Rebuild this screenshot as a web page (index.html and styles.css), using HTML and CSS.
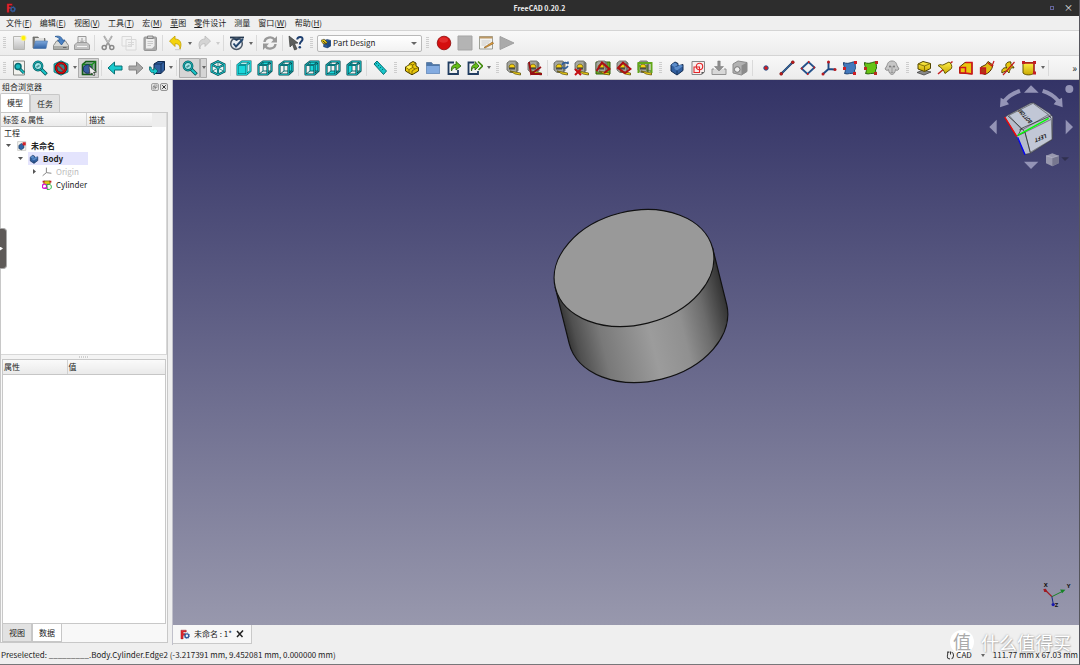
FILE: index.html
```html
<!DOCTYPE html>
<html lang="zh-CN">
<head>
<meta charset="utf-8">
<title>FreeCAD 0.20.2</title>
<link rel="stylesheet" href="styles.css">
</head>
<body>
<svg class="defs" aria-hidden="true">
  <defs>
    <linearGradient id="gGray" x2="0" y2="1"><stop stop-color="#f4f4f4"/><stop offset="1" stop-color="#bdbdbd"/></linearGradient>
    <linearGradient id="gBlue" x2="0" y2="1"><stop stop-color="#7fa9dc"/><stop offset="1" stop-color="#2f62a6"/></linearGradient>
    <linearGradient id="gYellow" x2="0" y2="1"><stop stop-color="#fff04a"/><stop offset="1" stop-color="#c9a800"/></linearGradient>
    <linearGradient id="gSide"><stop stop-color="#383838"/><stop offset=".05" stop-color="#505050"/><stop offset=".2" stop-color="#797979"/><stop offset=".5" stop-color="#9c9c9c"/><stop offset=".7" stop-color="#909090"/><stop offset=".85" stop-color="#6c6c6c"/><stop offset="1" stop-color="#333"/></linearGradient>
    <path id="cubeEdges" d="M1.500 5 6 1.500H14.500V11L10.500 14.500H1.500ZM1.500 5H10.500V14.500M10.500 5 14.500 1.500" fill="none"/>
    <path id="cubeBack" d="M6 1.500V11H14.500M6 11 1.500 14.500" fill="none"/>
    <g id="cubeWire"><use href="#cubeBack" stroke="#0c6e73" stroke-width="1"/><use href="#cubeEdges" stroke="#07494e" stroke-width="2.100" stroke-linejoin="round"/><use href="#cubeEdges" stroke="#17adb2" stroke-width=".9"/></g>
    <g id="tape"><path d="M1 3 3.500 1H9.500L12 3V10.500L10 12.500H4L1 10Z" fill="#a5a79f" stroke="#5a5c56" stroke-width=".8"/><path d="M9.500 1 12 3V10.500L10 12.500Z" fill="#75776f"/><path d="M3 7.500C3 3 9 3 9 7.500Z" fill="#f5d011" stroke="#5c4d00" stroke-width=".6"/><path d="M3 8H9V9.500H3Z" fill="#4a4b45"/><path d="M4 11 14.500 13V15L9 14Z" fill="#f0cf18" stroke="#554700" stroke-width=".7"/></g>
    <symbol id="logo" viewBox="0 0 16 16"><path d="M1.500 1H10V4H5V6.500H8V9.300H5V15H1.500Z" fill="#e3262e" stroke="#7b0f16" stroke-width=".6"/><circle cx="11" cy="10" r="3" fill="none" stroke="#315b9d" stroke-width="2.200"/><circle cx="11" cy="10" r="4.400" fill="none" stroke="#315b9d" stroke-width="1.200" stroke-dasharray="1.700 1.750"/></symbol>
    <symbol id="new" viewBox="0 0 16 16"><path d="M2.500 1.500H13.500V14.500H2.500Z" fill="url(#gGray)" stroke="#b6b6b2"/><circle cx="12.500" cy="3" r="3" fill="#fff36b" opacity=".8"/><circle cx="12.500" cy="3" r="1.900" fill="#fff200"/></symbol>
    <symbol id="open" viewBox="0 0 16 16"><path d="M1 13V2H6L7 3.500H13V13Z" fill="#81827e" stroke="#5e605c" stroke-width=".7"/><path d="M3 3H12V8H3Z" fill="#e1e1df"/><path d="M3.500 6H15.500L14 13.500H1.500Z" fill="url(#gBlue)" stroke="#4e79b0" stroke-width=".6"/></symbol>
    <symbol id="save" viewBox="0 0 16 16"><path d="M3.500 6H12.500L15.500 10.500V14.500H.5V10.500Z" fill="#d9dad7" stroke="#777975" stroke-width=".8"/><path d="M1 11H15V14H1Z" fill="#aaaca8"/><path d="M2 1.500C6 .5 9 1.500 9.500 5H12L8.500 10 4.500 5H6.500C6.500 3 4.500 2 2 1.500Z" fill="#4b82c4" stroke="#20528d" stroke-width=".7"/><path d="M10 12.500H13.500" stroke="#666"/></symbol>
    <symbol id="print" viewBox="0 0 16 16"><path d="M4 1.500H12V8H4Z" fill="#eee" stroke="#999"/><path d="M8 3V7M6 5.500 8 7.500 10 5.500" fill="none" stroke="#999"/><path d="M3 7.500H13L15.500 10V14.500H.5V10Z" fill="#c2c2c2" stroke="#9b9b9b"/><path d="M3 11.500H13" stroke="#f3f3f3"/></symbol>
    <symbol id="cut" viewBox="0 0 16 16"><path d="M4 1 10.300 11.500M12 1 5.700 11.500" stroke="#9b9b9b" stroke-width="1.700"/><path d="M4.500 1.500 8 7.500M11.500 1.500 8 7.500" stroke="#ddd" stroke-width=".6"/><circle cx="4.200" cy="12.500" r="2" fill="none" stroke="#898989" stroke-width="1.500"/><circle cx="11.800" cy="12.500" r="2" fill="none" stroke="#898989" stroke-width="1.500"/></symbol>
    <symbol id="copy" viewBox="0 0 16 16"><path d="M1 1.500H10.500V11H1ZM5 4.500H15V15H5Z" fill="#f3f3f3" stroke="#d8d8d8"/><path d="M7 7.500H13M7 9.500H13M7 11.500H11" stroke="#d9d9d9"/></symbol>
    <symbol id="paste" viewBox="0 0 16 16"><rect x="2" y="2" width="12.500" height="13.500" rx="1" fill="#aaa" stroke="#959595"/><path d="M4 4H12.500V11L10 13.500H4Z" fill="#eee"/><path d="M5.500 1H11V3.500H5.500Z" fill="#ccc" stroke="#777" stroke-width=".8"/><path d="M5.500 6.500H11M5.500 8.500H11M5.500 10.500H9" stroke="#c9c9c9"/></symbol>
    <symbol id="undo" viewBox="0 0 16 16"><path d="M1.500 6 7 1V4C12 4 14.500 8 12 14 12 10 10 8.500 7 8.700V11.500Z" fill="#f4d30b" stroke="#c2a000" stroke-width=".8"/><path d="M7 14.700H13" stroke="#ccc"/></symbol>
    <symbol id="redo" viewBox="0 0 16 16"><path d="M14.500 6 9 1V4C4 4 1.500 8 4 14 4 10 6 8.500 9 8.700V11.500Z" fill="#d4d4d4" stroke="#bababa" stroke-width=".8"/></symbol>
    <symbol id="check" viewBox="0 0 16 16"><path d="M1 2.500H15" stroke="#25384f" stroke-width="1.800"/><circle cx="7.500" cy="8.700" r="5.800" fill="#e8edf3" stroke="#4c5866" stroke-width="1.500"/><path d="M3 3.500H12L7.500 6Z" fill="#1d3858"/><path d="M4.500 8.500 7 11.500 14 4" fill="none" stroke="#24476f" stroke-width="1.900"/></symbol>
    <symbol id="refresh" viewBox="0 0 16 16"><path d="M2.500 7C3 2 10 1 12.500 4.500M13.500 9C13 14 6 15 3.500 11.500" fill="none" stroke="#999" stroke-width="2.400"/><path d="M15 1V7.500H9ZM1 15V8.500H7Z" fill="#999"/></symbol>
    <symbol id="whats" viewBox="0 0 16 16"><path d="M1 1 10 8 6.500 8.500 9 14 6.500 15 4.500 9.500 2 12Z" fill="#5c5e5c" stroke="#313331" stroke-width=".6"/><path d="M9.200 4.500C9.500 1 15 1 14.500 4.500 14.200 6.800 11.800 6.500 11.800 9.500" fill="none" stroke="#1e3f70" stroke-width="2"/><circle cx="11.800" cy="12.200" r="1.300" fill="#1e3f70"/></symbol>
    <symbol id="pd" viewBox="0 0 16 16"><path d="M5 3 10 1.500 15.500 3V12L10 15 4 13Z" fill="#2c5c9c" stroke="#123158" stroke-width=".8"/><path d="M10 5 15.500 3V12L10 15Z" fill="#214a80"/><path d="M0 3 5 1 10 6 8 9 3 8Z" fill="#e9cb1b" stroke="#3a3515"/><path d="M3 4 9 9" stroke="#111" stroke-width="1.200"/></symbol>
    <symbol id="record" viewBox="0 0 16 16"><circle cx="8" cy="8" r="6.800" fill="#d50e0e" stroke="#8d0808" stroke-width=".8"/><ellipse cx="7.500" cy="5" rx="4.500" ry="2.800" fill="#f04747" opacity=".5"/></symbol>
    <symbol id="stop" viewBox="0 0 16 16"><path d="M1 1H15V15H1Z" fill="#b4b4b4" stroke="#a5a5a5"/></symbol>
    <symbol id="macro" viewBox="0 0 16 16"><path d="M1.500 1.500H14.500V14H1.500Z" fill="#f2f2ef" stroke="#888a80" stroke-width=".8"/><path d="M1.500 1.500H14.500V3.500H1.500Z" fill="#bd9964"/><path d="M3.500 6H12.500M3.500 8H11M3.500 10H8" stroke="#bbb" stroke-width=".7"/><path d="M6 12.500 14.500 7 15.500 8.500 7 13Z" fill="#e9a23b" stroke="#82551b" stroke-width=".6"/></symbol>
    <symbol id="play" viewBox="0 0 16 16"><path d="M1 1.500 15 8 1 14.500Z" fill="#aaa" stroke="#a0a0a0"/></symbol>
    <symbol id="mag" viewBox="0 0 16 16"><path d="M8.500 8.500 14.500 14.500" stroke="#075357" stroke-width="3.600"/><path d="M9 9 14 14" stroke="#18c7ca" stroke-width="2"/><circle cx="6" cy="6" r="4.200" fill="#a9eaec" stroke="#07555a" stroke-width="2.400"/><circle cx="6" cy="6" r="4.200" fill="none" stroke="#17bdc1" stroke-width="1.100"/></symbol>
    <symbol id="fitall" viewBox="0 0 16 16"><path d="M2.500 1H13.500V15H2.500Z" fill="#f2f2ee" stroke="#858783"/><path d="M8.500 8.500 13 13" stroke="#075357" stroke-width="3"/><path d="M9 9 13 13" stroke="#18c7ca" stroke-width="1.500"/><circle cx="7" cy="6.500" r="3" fill="#18bbc0" stroke="#086a70" stroke-width="1.500"/></symbol>
    <symbol id="fitsel" viewBox="0 0 16 16"><use href="#mag"/><path d="M4 6.500 7 4.500 8 6 5 8Z" fill="#4d969a"/></symbol>
    <symbol id="nodraw" viewBox="0 0 16 16"><path d="M8 .8 15 4V12L8 15.200 1 12V4Z" fill="#19c5ca" stroke="#08686c" stroke-width=".8"/><circle cx="8" cy="8" r="5" fill="#3d8589" stroke="#5a0707" stroke-width="2.600"/><circle cx="8" cy="8" r="5" fill="none" stroke="#d40c0c" stroke-width="1.300"/><path d="M4.500 4.500 11.500 11.500" stroke="#d40c0c" stroke-width="1.500"/></symbol>
    <symbol id="selbox" viewBox="0 0 16 16"><path d="M1.500 4.500 5 1.500H14.500V11.500L11 14.500H1.500Z" fill="#92a8a3" stroke="#165d19" stroke-width="1.600"/><path d="M1.500 4.500H11V14.500M11 4.500 14.500 1.500" fill="none" stroke="#168f1b" stroke-width="1.400"/><circle cx="6.500" cy="9" r="4.300" fill="#355e9f" stroke="#172c5c"/><path d="M8 6 15.500 12 12.500 12.300 14 15 12.500 16 11 13 9 14.500Z" fill="#eee" stroke="#333" stroke-width=".7"/></symbol>
    <symbol id="left" viewBox="0 0 16 16"><path d="M1 8 7.500 2V6H15V10H7.500V14Z" fill="#18c9cd" stroke="#087074"/></symbol>
    <symbol id="right" viewBox="0 0 16 16"><path d="M15 8 8.500 2V6H1V10H8.500V14Z" fill="#a9a9a9" stroke="#858585"/></symbol>
    <symbol id="link" viewBox="0 0 16 16"><path d="M5 4 9 1.500H15.500V10L12 13.500H5Z" fill="#315f9f" stroke="#10294d"/><path d="M5 4H12V13.500M12 4 15.500 1.500" fill="none" stroke="#10294d" stroke-width=".8"/><path d="M0 7C1 13 3 13 5 12.500V15L9 11 5 7.500V10C3 10 2 9 2 7Z" fill="#18c7ca" stroke="#075b60" stroke-width=".8"/></symbol>
    <symbol id="iso" viewBox="0 0 16 16"><path d="M8 1.200 14.500 4.500V11.500L8 14.800 1.500 11.500V4.500ZM1.500 4.500 8 7.700 14.500 4.500M8 7.700V14.800" fill="#e8f8f8" stroke="#07494e" stroke-width="2.100"/><path d="M8 1.200V8M1.500 11.500 8 8 14.500 11.500" stroke="#0d7377" stroke-width=".8" fill="none"/><path d="M8 1.200 14.500 4.500V11.500L8 14.800 1.500 11.500V4.500ZM1.500 4.500 8 7.700 14.500 4.500M8 7.700V14.800" fill="none" stroke="#19c0c5" stroke-width="1"/></symbol>
    <symbol id="front" viewBox="0 0 16 16"><path d="M1.500 5 6 1.500H14.500V11L10.500 14.500H1.500Z" fill="#b9eff0"/><path d="M1.500 5H10.500V14.500H1.500Z" fill="#18d8db"/><use href="#cubeEdges" stroke="#07595e" stroke-width="1.900"/><use href="#cubeEdges" stroke="#19c8cc" stroke-width="1.100"/></symbol>
    <symbol id="top" viewBox="0 0 16 16"><path d="M1.500 5 6 1.500H14.500L10.500 5Z" fill="#18d8db"/><use href="#cubeWire"/></symbol>
    <symbol id="rightv" viewBox="0 0 16 16"><path d="M10.500 5 14.500 1.500V11L10.500 14.500Z" fill="#18d8db"/><use href="#cubeWire"/></symbol>
    <symbol id="rear" viewBox="0 0 16 16"><path d="M6 1.500H14.500V11H6Z" fill="#18d8db"/><use href="#cubeWire"/></symbol>
    <symbol id="bottom" viewBox="0 0 16 16"><path d="M1.500 14.500 6 11H14.500L10.500 14.500Z" fill="#18d8db"/><use href="#cubeWire"/></symbol>
    <symbol id="leftv" viewBox="0 0 16 16"><path d="M1.500 5 6 1.500V11L1.500 14.500Z" fill="#18d8db"/><use href="#cubeWire"/></symbol>
    <symbol id="ruler" viewBox="0 0 16 16"><path d="M2 4 5 1 14.500 11 11.500 14.500Z" fill="#19c7cb" stroke="#077176"/><path d="M5 3 3.800 4.200M7 5 5.800 6.200M9 7 7.800 8.200M11 9 9.800 10.200" stroke="#07575b" stroke-width=".8"/></symbol>
    <symbol id="part" viewBox="0 0 16 16"><path d="M1.500 7 5 5 5.500 3.500 9 1.500 12 3V6L14.500 7.500V11L8 14.800 1.500 11Z" fill="#e9c60b" stroke="#4a3e00"/><path d="M5.500 3.500 8.700 5 12 3M8.700 5V7.500L5 9.500 1.500 7M5 9.500V13M8.700 7.500 11 9 14.500 7.500M11 9 8 11V14" fill="none" stroke="#6c5b00" stroke-width=".8"/><path d="M2 7 5 5.500 8 7 5 9Z" fill="#fff158"/></symbol>
    <symbol id="group" viewBox="0 0 16 16"><path d="M1.500 13.500V2.500H6.500L8 4.500H14.500V13.500Z" fill="#4d77aa" stroke="#56769d" stroke-width=".8"/><path d="M1.500 6H14.500V13.500H1.500Z" fill="#83abe0"/></symbol>
    <symbol id="lk" viewBox="0 0 16 16"><path d="M8 2.500H2.500V14H12V10" fill="none" stroke="#203c60" stroke-width="1.800"/><path d="M5.500 11C5 6 7 4.500 10 4.500V1.500L15 6 10 10V7.500C7.500 7.500 6.500 8.500 5.500 11Z" fill="#65be17" stroke="#23580a" stroke-width=".8"/></symbol>
    <symbol id="lks" viewBox="0 0 16 16"><path d="M7 2.500H1.500V14H11V11" fill="none" stroke="#203c60" stroke-width="1.800"/><path d="M4.500 11C4 6 6 4.500 8 4.500V1.500L12 6 8 10V7.500C6 7.500 5 8.500 4.500 11Z" fill="#65be17" stroke="#23580a" stroke-width=".8"/><path d="M11 1.500 15.500 6 11.500 10" fill="none" stroke="#438b10" stroke-width="1.700"/></symbol>
    <symbol id="m1" viewBox="0 0 16 16"><use href="#tape"/></symbol>
    <symbol id="m2" viewBox="0 0 16 16"><use href="#tape"/><path d="M2 2 4 14 14 7M4 14H15" fill="none" stroke="#960e12" stroke-width="1.800"/></symbol>
    <symbol id="m3" viewBox="0 0 16 16"><use href="#tape"/><path d="M9 5C10 2 14 2 15 4V1.500M15 6C13 9 10 9 9 7" fill="none" stroke="#315f99" stroke-width="1.600"/></symbol>
    <symbol id="m4" viewBox="0 0 16 16"><use href="#tape"/><path d="M1 9 7 15M7 9 1 15" stroke="#c50d12" stroke-width="2"/></symbol>
    <symbol id="m5" viewBox="0 0 16 16"><path d="M1 2H15V14H1Z" fill="#69ad1c" stroke="#345f0b"/><use href="#tape"/><path d="M1.500 11 7 2.500 14.500 9 9 13" fill="none" stroke="#ad0e12" stroke-width="1.900"/></symbol>
    <symbol id="m6" viewBox="0 0 16 16"><use href="#tape"/><path d="M2 8 7 2.500 14.500 9 9 13Z" fill="none" stroke="#ad0e12" stroke-width="1.900"/></symbol>
    <symbol id="m7" viewBox="0 0 16 16"><use href="#tape"/><path d="M1.500 13V3H14.500V13M1 6H4" fill="none" stroke="#62a71a" stroke-width="2"/><path d="M10 5V11H14" fill="none" stroke="#3c6d0c"/></symbol>
    <symbol id="body" viewBox="0 0 16 16"><path d="M2 5 6 2 9 3.500V6L14 4.500V10.500L8 15 2 11Z" fill="#315f9f" stroke="#102b50"/><path d="M2 5 5.500 7 9 5 6 2.500ZM5.500 7V9L8 10.500 14 6 11 4.500 8 7Z" fill="#5b8cca"/><path d="M8 10.500V14.500" stroke="#163761"/></symbol>
    <symbol id="sketch" viewBox="0 0 16 16"><path d="M2 1.500H14.500V12L11.500 14.500H2Z" fill="#f7eeee" stroke="#858585"/><circle cx="9.500" cy="6.500" r="3.200" fill="none" stroke="#e32629" stroke-width="1.100"/><path d="M4 7H9.500V12.500H4Z" fill="none" stroke="#e32629" stroke-width="1.100"/><path d="M11.500 14.500V12H14.500Z" fill="#555"/></symbol>
    <symbol id="attach" viewBox="0 0 16 16"><path d="M3 9H1V14.500H15V9H13" fill="#d8d8d8" stroke="#929292"/><path d="M6.800 1H9.200V6.500H12.500L8 11 3.500 6.500H6.800Z" fill="#8f8f8f" stroke="#727272" stroke-width=".5"/></symbol>
    <symbol id="sub" viewBox="0 0 16 16"><path d="M1 4 6 1 15 2.500V11.500L9.500 15 1 13Z" fill="#b2b2b2" stroke="#8a8a8a"/><path d="M9.500 5.500 15 2.500V11.500L9.500 15Z" fill="#8b8b8b"/><circle cx="5.200" cy="9.500" r="2.800" fill="#eee" stroke="#777"/></symbol>
    <symbol id="point" viewBox="0 0 16 16"><circle cx="8" cy="8" r="2.200" fill="#dc1717" stroke="#22538e"/></symbol>
    <symbol id="line" viewBox="0 0 16 16"><path d="M2 14 14 2" stroke="#183a66" stroke-width="2"/><path d="M2 14 14 2" stroke="#3a6ead" stroke-width=".8"/><circle cx="2.200" cy="13.800" r="1.500" fill="#c91b1b" stroke="#601010" stroke-width=".5"/><circle cx="13.800" cy="2.200" r="1.500" fill="#c91b1b" stroke="#601010" stroke-width=".5"/></symbol>
    <symbol id="plane" viewBox="0 0 16 16"><path d="M1.500 8.500 8.500 2 14.500 7.500 7.500 14Z" fill="none" stroke="#24518a" stroke-width="1.800"/><path d="M1 8.500H2.500M8 2H9.500M13.500 7.500H15M7 14H8.500" stroke="#cb1d1d" stroke-width="2.200"/></symbol>
    <symbol id="cs" viewBox="0 0 16 16"><path d="M7.500 2V9L14 9.500M7.500 9 2 14" fill="none" stroke="#1f4b83" stroke-width="1.900"/><circle cx="7.500" cy="2" r="1.500" fill="#b91b20"/><circle cx="14" cy="9.500" r="1.500" fill="#b91b20"/><circle cx="2" cy="14" r="1.500" fill="#b91b20"/></symbol>
    <symbol id="sb" viewBox="0 0 16 16"><path d="M1.500 2.500C7 5 10 1 14 2 12 6 15 8 12.500 10L13 14C9 12 6 15 2.500 13.500 5 9 1 7 1.500 2.500Z" fill="#4379bc" stroke="#204473"/><path d="M12 1H15V4H12ZM1 7H4V10H1ZM11 12H14V15H11Z" fill="#cf1e24"/></symbol>
    <symbol id="sbg" viewBox="0 0 16 16"><path d="M1.500 2.500C7 5 10 1 14 2 12 6 15 8 12.500 10L13 14C9 12 6 15 2.500 13.500 5 9 1 7 1.500 2.500Z" fill="#67c315" stroke="#28600a"/><path d="M12 1H15V4H12ZM1 7H4V10H1ZM11 12H14V15H11Z" fill="#b92a20"/></symbol>
    <symbol id="clone" viewBox="0 0 16 16"><path d="M8 1C12 1 12.500 4 13 5.500L15 9 13 10.500 11.500 9.500C11 16 5 16 4.500 9.500L3 10.500 1 9 3 5.500C3.500 4 4 1 8 1Z" fill="#c6c6c6" stroke="#909090"/><path d="M8 6V12M6.500 12.500H9.500" stroke="#999"/><circle cx="6" cy="6.500" r="1" fill="#777"/><circle cx="10" cy="6.500" r="1" fill="#777"/></symbol>
    <symbol id="pad" viewBox="0 0 16 16"><path d="M1 12.500 7 10 15 12 8 15Z" fill="#888" stroke="#444" stroke-width=".8"/><path d="M2 4 7 1.500 14.500 3.500V8.500L8.500 11.500 2 9Z" fill="url(#gYellow)" stroke="#514400"/><path d="M2 4 8.500 6 14.500 3.500M8.500 6V11.500" fill="none" stroke="#6d5c00" stroke-width=".8"/></symbol>
    <symbol id="rev" viewBox="0 0 16 16"><path d="M1 14 15.500 1.500" stroke="#c51e20" stroke-width="1.500"/><path d="M1 5.500C4 3.500 5 6 7 4.500L12 2C14 3 15.500 6 14.500 8.500L8 13.500C7 10 4 7.500 1 5.500Z" fill="url(#gYellow)" stroke="#685800"/></symbol>
    <symbol id="loft" viewBox="0 0 16 16"><path d="M1.500 7 7 2.500H14V14L7 13.500 1.500 13Z" fill="#e8c60d" stroke="#5c2e00"/><path d="M2 7.500H7.500V13H2ZM7.500 2.500H14V14L7.500 13" fill="none" stroke="#d3151c" stroke-width="1.500"/></symbol>
    <symbol id="pipe" viewBox="0 0 16 16"><path d="M2 7 7 4.500 9 1.500 14 5C13 10 10 13 6 14.500L1.500 13Z" fill="#e1bd10" stroke="#5a3500"/><path d="M1.500 8H6.500V13.500H1.500Z" fill="#b13815" stroke="#c8151c" stroke-width="1.300"/><path d="M9 3 13 6 15 1" stroke="#c8151c" stroke-width="1.200" fill="none"/></symbol>
    <symbol id="helix" viewBox="0 0 16 16"><path d="M2 13C1 9 4 7 7 8 4 5 7 1 11 2 10 5 13 5 14 8 11 7 10 9 9 13 7 10 5 11 2 13Z" fill="#e7c60e" stroke="#4e4200"/><path d="M3 15 14.500 2" stroke="#bf1c1e" stroke-width="1.200"/></symbol>
    <symbol id="prim" viewBox="0 0 16 16"><path d="M2 2.500H13V13C11 15.500 4 15.500 2 13Z" fill="url(#gYellow)" stroke="#675700"/><path d="M2 3H13M13 3V13" stroke="#b71921" stroke-width="1.300"/><path d="M1 1H4V4H1ZM12 1H15V4H12ZM12 11.500H15V14.500H12Z" fill="#c31d24"/></symbol>
    <symbol id="doc" viewBox="0 0 16 16"><path d="M1 1H14V15H1Z" fill="#f6f6f2" stroke="#b7b7b4"/><path d="M3 7 7 4 11 6V11L7 14 3 12Z" fill="#2f65a8" stroke="#0c2a50"/><path d="M9 2H14V7H9Z" fill="#d42128"/></symbol>
    <symbol id="origin" viewBox="0 0 16 16"><path d="M7 1V9L15 10M7 9 1 14" fill="none" stroke="#888" stroke-width="1.600"/></symbol>
    <symbol id="cyl" viewBox="0 0 16 16"><path d="M3 1.500H13V7H3Z" fill="#e2ca14" stroke="#664c00"/><path d="M1 1H4V4H1ZM12 1H15V4H12Z" fill="#c31d24"/><circle cx="4" cy="10" r="3.500" fill="#fff" stroke="#d813cf" stroke-width="2"/><path d="M8 7H12C16 8 16 14 12 15H8Z" fill="#f1fff2" stroke="#16ae35" stroke-width="1.500"/><path d="M4 13H9" stroke="#d813cf" stroke-width="2"/></symbol>
    <symbol id="float" viewBox="0 0 16 16"><rect x="1" y="1" width="14" height="14" rx="3" fill="#e5e5e5" stroke="#888" stroke-width="1.500"/><path d="M6 4H12V9H6ZM4 7H9V12H4Z" fill="none" stroke="#666" stroke-width="1"/></symbol>
    <symbol id="close" viewBox="0 0 16 16"><rect x="1" y="1" width="14" height="14" rx="3" fill="#e5e5e5" stroke="#777" stroke-width="1.500"/><path d="M4.500 4.500 11.500 11.500M11.500 4.500 4.500 11.500" stroke="#333" stroke-width="2"/></symbol>
    <symbol id="tabx" viewBox="0 0 16 16"><path d="M2 2 13 14M14 1 2 14" stroke="#222" stroke-width="3"/></symbol>
    <symbol id="mouse" viewBox="0 0 16 16"><path d="M6 2H3V6C1 11 3 14 7 14M10 2C15 4 14 12 10 14M8 1V6" fill="none" stroke="#333" stroke-width="1.800"/></symbol>
  </defs>
</svg>

<div class="app">
  <header class="titlebar">
    <svg class="app-logo"><use href="#logo"/></svg>
    <h1>FreeCAD 0.20.2</h1>
    <div class="window-buttons"><button class="max" aria-label="最大化"></button><button class="shut" aria-label="关闭">×</button></div>
  </header>

  <nav class="menubar">
    <button>文件(<u>F</u>)</button><button>编辑(<u>E</u>)</button><button>视图(<u>V</u>)</button><button>工具(<u>T</u>)</button><button>宏(<u>M</u>)</button><button><u>草</u>图</button><button><u>零</u>件设计</button><button>测量</button><button>窗口(<u>W</u>)</button><button>帮助(<u>H</u>)</button>
  </nav>

  <div class="toolbar" role="toolbar" aria-label="文件">
    <i class="grip first"></i>
    <button class="tool" aria-label="新建"><svg><use href="#new"/></svg></button>
    <button class="tool" aria-label="打开"><svg><use href="#open"/></svg></button>
    <button class="tool" aria-label="保存"><svg><use href="#save"/></svg></button>
    <button class="tool" aria-label="打印"><svg><use href="#print"/></svg></button>
    <i class="sep"></i>
    <button class="tool" aria-label="剪切"><svg><use href="#cut"/></svg></button>
    <button class="tool" aria-label="复制"><svg><use href="#copy"/></svg></button>
    <button class="tool" aria-label="粘贴"><svg><use href="#paste"/></svg></button>
    <i class="sep"></i>
    <button class="tool" aria-label="撤销"><svg><use href="#undo"/></svg></button><button class="drop" aria-label="撤销列表"></button>
    <button class="tool" aria-label="重做"><svg><use href="#redo"/></svg></button><button class="drop off" aria-label="重做列表"></button>
    <i class="sep"></i>
    <button class="tool" aria-label="检查"><svg><use href="#check"/></svg></button><button class="drop" aria-label="检查选项"></button>
    <i class="sep"></i>
    <button class="tool" aria-label="刷新"><svg><use href="#refresh"/></svg></button>
    <i class="sep"></i>
    <button class="tool" aria-label="这是什么"><svg><use href="#whats"/></svg></button>
    <i class="grip"></i>
    <div class="workbench"><svg><use href="#pd"/></svg><select aria-label="工作台"><option>Part Design</option></select></div>
    <i class="grip"></i>
    <button class="tool" aria-label="录制宏"><svg><use href="#record"/></svg></button>
    <button class="tool" aria-label="停止"><svg><use href="#stop"/></svg></button>
    <button class="tool" aria-label="宏"><svg><use href="#macro"/></svg></button>
    <button class="tool" aria-label="执行宏"><svg><use href="#play"/></svg></button>
  </div>

  <div class="toolbar views" role="toolbar" aria-label="视图与零件设计">
    <i class="grip first"></i>
    <button class="tool" aria-label="适合全部"><svg><use href="#fitall"/></svg></button>
    <button class="tool" aria-label="适合选择"><svg><use href="#fitsel"/></svg></button>
    <button class="tool" aria-label="绘图样式"><svg><use href="#nodraw"/></svg></button><button class="drop" aria-label="样式列表"></button>
    <button class="tool on" aria-label="边界框"><svg><use href="#selbox"/></svg></button>
    <i class="sep"></i>
    <button class="tool" aria-label="后退"><svg><use href="#left"/></svg></button>
    <button class="tool" aria-label="前进"><svg><use href="#right"/></svg></button>
    <button class="tool" aria-label="链接导航"><svg><use href="#link"/></svg></button><button class="drop" aria-label="链接列表"></button>
    <i class="sep"></i>
    <button class="tool on" aria-label="缩放"><svg><use href="#fitsel"/></svg></button><button class="drop on" aria-label="缩放列表"></button>
    <button class="tool" aria-label="等轴测"><svg><use href="#iso"/></svg></button>
    <i class="sep"></i>
    <button class="tool" aria-label="前视"><svg><use href="#front"/></svg></button>
    <button class="tool" aria-label="俯视"><svg><use href="#top"/></svg></button>
    <button class="tool" aria-label="右视"><svg><use href="#rightv"/></svg></button>
    <i class="sep"></i>
    <button class="tool" aria-label="后视"><svg><use href="#rear"/></svg></button>
    <button class="tool" aria-label="仰视"><svg><use href="#bottom"/></svg></button>
    <button class="tool" aria-label="左视"><svg><use href="#leftv"/></svg></button>
    <i class="sep"></i>
    <button class="tool" aria-label="测量距离"><svg><use href="#ruler"/></svg></button>
    <i class="grip"></i>
    <button class="tool" aria-label="创建零件"><svg><use href="#part"/></svg></button>
    <button class="tool" aria-label="创建组"><svg><use href="#group"/></svg></button>
    <button class="tool" aria-label="创建链接"><svg><use href="#lk"/></svg></button>
    <button class="tool" aria-label="链接操作"><svg><use href="#lks"/></svg></button><button class="drop" aria-label="链接操作列表"></button>
    <i class="grip"></i>
    <button class="tool" aria-label="线性测量"><svg><use href="#m1"/></svg></button>
    <button class="tool" aria-label="角度测量"><svg><use href="#m2"/></svg></button>
    <i class="sep"></i>
    <button class="tool" aria-label="刷新测量"><svg><use href="#m3"/></svg></button>
    <button class="tool" aria-label="清除测量"><svg><use href="#m4"/></svg></button>
    <button class="tool" aria-label="切换全部"><svg><use href="#m5"/></svg></button>
    <button class="tool" aria-label="切换三维"><svg><use href="#m6"/></svg></button>
    <button class="tool" aria-label="切换增量"><svg><use href="#m7"/></svg></button>
    <i class="grip"></i>
    <button class="tool" aria-label="创建实体"><svg><use href="#body"/></svg></button>
    <button class="tool" aria-label="创建草图"><svg><use href="#sketch"/></svg></button>
    <button class="tool" aria-label="映射草图"><svg><use href="#attach"/></svg></button>
    <button class="tool" aria-label="子形状"><svg><use href="#sub"/></svg></button>
    <i class="sep"></i>
    <button class="tool" aria-label="基准点"><svg><use href="#point"/></svg></button>
    <button class="tool" aria-label="基准线"><svg><use href="#line"/></svg></button>
    <button class="tool" aria-label="基准面"><svg><use href="#plane"/></svg></button>
    <button class="tool" aria-label="坐标系"><svg><use href="#cs"/></svg></button>
    <button class="tool" aria-label="形状粘合"><svg><use href="#sb"/></svg></button>
    <button class="tool" aria-label="子对象粘合"><svg><use href="#sbg"/></svg></button>
    <button class="tool" aria-label="克隆"><svg><use href="#clone"/></svg></button>
    <i class="grip"></i>
    <button class="tool" aria-label="凸台"><svg><use href="#pad"/></svg></button>
    <button class="tool" aria-label="旋转体"><svg><use href="#rev"/></svg></button>
    <button class="tool" aria-label="放样"><svg><use href="#loft"/></svg></button>
    <button class="tool" aria-label="管道"><svg><use href="#pipe"/></svg></button>
    <button class="tool" aria-label="螺旋"><svg><use href="#helix"/></svg></button>
    <button class="tool" aria-label="基本体"><svg><use href="#prim"/></svg></button><button class="drop" aria-label="基本体列表"></button>
    <i class="sep"></i>
    <button class="more" aria-label="更多">»</button>
  </div>

  <main class="work">
    <aside class="dock">
      <div class="dock-title"><h2>组合浏览器</h2><button aria-label="浮动"><svg><use href="#float"/></svg></button><button aria-label="关闭面板"><svg><use href="#close"/></svg></button></div>
      <div class="tabs upper" role="tablist"><button role="tab" class="current">模型</button><button role="tab">任务</button></div>
      <div class="pane">
        <section class="tree">
          <div class="tree-head"><span class="c1">标签 &amp; 属性</span><span class="c2">描述</span></div>
          <ul>
            <li>工程</li>
            <li class="l1"><i class="caret"></i><svg><use href="#doc"/></svg><b>未命名</b></li>
            <li class="l2"><i class="caret"></i><span class="picked"><svg><use href="#body"/></svg><b>Body</b></span></li>
            <li class="l3 dim"><i class="caret shut"></i><svg><use href="#origin"/></svg>Origin</li>
            <li class="l3"><i class="caret none"></i><svg><use href="#cyl"/></svg>Cylinder</li>
          </ul>
        </section>
        <div class="splitter"></div>
        <section class="props"><table><thead><tr><th class="key">属性</th><th>值</th></tr></thead></table></section>
        <div class="tabs lower" role="tablist"><button role="tab">视图</button><button role="tab" class="current">数据</button></div>
      </div>
      <button class="side-handle" aria-label="展开侧栏"></button>
    </aside>

    <section class="mdi">
      <div class="viewport">
        <svg class="scene" viewBox="0 0 907 544" role="img" aria-label="Cylinder">
          <g transform="translate(461.500 187.500) rotate(-14)" stroke="#111" stroke-width="1.200">
            <path d="M-81.200 0V57.700A81.200 56.800 0 0 0 81.200 57.700V0Z" fill="url(#gSide)"/>
            <ellipse rx="81.200" ry="56.800" fill="#999"/>
          </g>
        </svg>
        <svg class="navcube" viewBox="0 12 330 300" role="img" aria-label="导航立方体">
          <g fill="#9494b6"><path d="M165 50 186 28 209 50Z"/><path d="M165 257H208L186 279Z"/><path d="M83 131V175L61 153Z"/><path d="M290 131V175L312 153Z"/><circle cx="301" cy="39" r="12"/><path d="M151 39 155 50Q126 60 113 76L120 85 93 94 95 65 103 70Q121 48 151 39Z"/><path d="M223 39 219 50Q248 60 261 76L254 85 281 94 279 65 271 70Q253 48 223 39Z"/></g>
          <path d="M108 124 117 117 184 82 193 80 241 111 251 122 250 190 184 232 168 235 142 179Z" fill="#b6bccb" stroke="#333" stroke-width="1.500"/>
          <path d="M120 118 192 82 238 116 159 162Z" fill="#c1c7d6" stroke="#353535" stroke-width="1.500"/>
          <path d="M168 169 247 130 249 190 184 229Z" fill="#c1c7d6" stroke="#353535" stroke-width="1.500"/>
          <path d="M117 120 158 157 147 178M159 157 168 169 144 180M168 169 184 231M238 116 247 128M151 162 162 155 247 119" fill="none" stroke="#222" stroke-width="2"/>
          <g fill="#171717" font-family="Noto Sans,sans-serif" font-weight="bold" text-anchor="middle"><text transform="matrix(-.67 -.75 1.300 -.700 174 118)" font-size="12">BOTTOM</text><text transform="matrix(-.85 .35 -.15 -.95 214 180)" font-size="18">LEFT</text></g>
          <path d="M107 123 143 181" stroke="red" stroke-width="4"/><path d="M146 178 239 127" stroke="#0f0" stroke-width="4"/><path d="M146 184 168 236" stroke="#00f" stroke-width="4"/>
          <path d="M231 239 250 232 269 239V262L250 271 231 262Z" fill="#9898ae"/><path d="M250 245V271L269 262V239Z" fill="#77778f"/><path d="M231 239 250 245 269 239" fill="none" stroke="#b7b7cb" stroke-width="2"/><path d="M277 244H300L288 255Z" fill="#30304f"/>
        </svg>
        <svg class="axes" viewBox="300 30 100 90" role="img" aria-label="坐标轴">
          <path d="M336 80 315 59" stroke="#a01922" stroke-width="4"/><path d="M310 57 318 56 322 66 313 66Z" fill="#a01922"/><path d="M336 80 368 64" stroke="#168326" stroke-width="3"/><path d="M361 58 377 59 367 70Z" fill="#168326"/><path d="M336 80 340 101" stroke="#172384" stroke-width="3"/><circle cx="340" cy="104" r="5" fill="#1717ad"/>
          <g fill="#111" font-family="Noto Sans,sans-serif" font-weight="bold" font-size="18"><text x="311" y="52">X</text><text x="381" y="53">Y</text><text x="345" y="112">Z</text></g>
        </svg>
      </div>
      <div class="doc-tabs"><div class="doc-tab"><svg><use href="#logo"/></svg><span>未命名 : 1*</span><button aria-label="关闭文档"><svg><use href="#tabx"/></svg></button></div></div>
    </section>
  </main>

  <footer class="status">
    <span class="message">Preselected: _________.Body.Cylinder.Edge2 (-3.217391 mm, 9.452081 mm, 0.000000 mm)</span>
    <button class="nav-style"><svg><use href="#mouse"/></svg>CAD<i></i></button>
    <span>111.77 mm x 67.03 mm</span>
    <div class="watermark"><span class="seal">值</span><span class="brand">什么值得买</span></div>
  </footer>
</div>
</body>
</html>
```
FILE: styles.css
```css
* { box-sizing: border-box; }
body { margin: 0; font: 8px/12px "Noto Sans CJK SC", "Noto Sans", sans-serif; color: #222; background: #efefef; }
button, select { font: inherit; color: inherit; margin: 0; padding: 0; border: 0; background: none; }
svg { display: block; flex: none; }
h1, h2, ul { margin: 0; padding: 0; font: inherit; list-style: none; }
.defs { position: absolute; width: 0; height: 0; }
.app { min-height: 100vh; display: flex; flex-direction: column; border-right: 1px solid #55555c; border-bottom: 1px solid #77777a; }

.titlebar { display: grid; grid-template-columns: 1fr auto 1fr; align-items: center; height: 16px; padding: 0 6px; background: #2d2d2d; color: #eee; }
.titlebar h1 { font-weight: bold; font-size: 7px; }
.app-logo { width: 10px; height: 10px; }
.window-buttons { display: flex; justify-content: flex-end; align-items: center; gap: 10px; }
.window-buttons .max { width: 4px; height: 4px; border: 1px solid #65659a; }
.window-buttons .shut { font-size: 9px; }

.menubar { display: flex; gap: 8px; height: 14px; line-height: 14px; padding: 0 6px; background: #efefef; }
.menubar button { white-space: nowrap; }
.menubar u { text-underline-offset: 1px; }

.toolbar { display: flex; align-items: center; height: 25px; background: linear-gradient(#f8f8f8, #ececec); border-top: 1px solid #d4d4d4; }
.toolbar.views { height: 24px; }
.tool { width: 21px; height: 20px; display: grid; place-items: center; flex: none; }
.tool svg { width: 16px; height: 16px; }
.tool.on, .drop.on { background: #d5d5d5; box-shadow: inset 0 0 0 1px #adadad; border-radius: 1px; }
.drop { width: 7px; height: 20px; flex: none; display: grid; place-items: center; }
.drop::before, .nav-style i { content: ""; border: 2px solid transparent; border-top: 3px solid #666; border-bottom: 0; }
.drop.off::before { border-top-color: #ccc; }
.sep { width: 5px; height: 16px; flex: none; background: linear-gradient(#dadada, #dadada) center / 1px 100% no-repeat; }
.grip { width: 11px; height: 12px; flex: none; background: repeating-linear-gradient(#cdcdcd 0 1px, transparent 1px 2px); border: solid transparent; border-width: 0 4px; background-clip: padding-box; }
.grip.first { width: 8px; border-width: 0 2px 0 3px; }
.workbench { position: relative; width: 105px; }
.workbench svg { position: absolute; left: 4px; top: 3px; width: 10px; height: 11px; }
.workbench select { width: 100%; height: 17px; appearance: none; padding-left: 15px; border: 1px solid #b9b9b9; border-radius: 2px; background: linear-gradient(#fff, #f2f2f2); }
.workbench::after { content: ""; position: absolute; right: 5px; top: 7px; border: 3px solid transparent; border-top-color: #666; border-bottom: 0; }
.more { margin-left: auto; margin-right: 2px; font-size: 10px; }

.work { flex: 1; display: grid; grid-template-columns: 168px 1fr; column-gap: 4px; border-top: 1px solid #c3c3c3; }
.dock { position: relative; display: flex; flex-direction: column; }
.dock-title { display: flex; align-items: center; gap: 1px; height: 13px; padding-left: 2px; }
.dock-title h2 { flex: 1; line-height: 14px; }
.dock-title button svg { width: 8px; height: 8px; }
.tabs { display: flex; align-items: stretch; }
.tabs button { width: 30px; border: 1px solid #c7c7c7; background: #e2e2e2; }
.tabs .current { background: #fff; }
.tabs.upper { height: 19px; }
.tabs.upper button { border-bottom: 0; border-radius: 2px 2px 0 0; }
.tabs.upper button:last-child { margin-top: 1px; }
.tabs.lower { height: 18px; padding-left: 1px; }
.tabs.lower button { border-top: 0; }
.pane { flex: 1; display: flex; flex-direction: column; border: 1px solid #c8c8c8; background: #f8f8f8; margin-bottom: 2px; }
.tree { flex: 243; border: 1px solid #d8d8d8; border-width: 0 1px 1px 0; background: #fff; }
.tree-head { display: flex; height: 14px; line-height: 14px; background: #ededed; padding-right: 14px; }
.tree-head span { background: linear-gradient(#fafafa, #eaeaea); border-bottom: 1px solid #c6c6c6; padding-left: 2px; }
.tree-head .c1 { width: 86px; border-right: 1px solid #d0d0d0; }
.tree-head .c2 { flex: 1; }
.tree li { display: flex; align-items: center; height: 13px; gap: 4px; padding-left: 3px; }
.tree li:first-child { height: 12px; }
.tree li svg { width: 10px; height: 10px; }
.tree .l1 { padding-left: 5px; }
.tree .l2 { padding-left: 17px; gap: 5px; }
.tree .l3 { padding-left: 32px; }
.tree .l1 .caret { margin-right: 2px; }
.tree .dim { color: #bbb; }
.caret { width: 5px; height: 3px; background: #555; clip-path: polygon(0 0, 100% 0, 50% 100%); }
.caret.shut, .caret.none { width: 3px; height: 5px; margin-right: 2px; clip-path: polygon(0 0, 100% 50%, 0 100%); }
.caret.none { visibility: hidden; }
.picked { display: flex; align-items: center; gap: 4px; width: 60px; height: 13px; padding-left: 1px; background: #e4e4fd; }
.splitter { height: 4px; background: repeating-linear-gradient(90deg, #d0d0d0 0 1px, transparent 1px 2px); border: solid #f4f4f4; border-width: 1px 78px; background-clip: padding-box; }
.props { flex: 266; margin: 0 1px; border: 1px solid #c8c8c8; background: #fff; }
.props table { width: 100%; border-collapse: collapse; table-layout: fixed; }
.props th { height: 14px; padding: 0 1px; line-height: 14px; text-align: left; font-weight: normal; background: linear-gradient(#fafafa, #eaeaea); border-bottom: 1px solid #c6c6c6; }
.props .key { width: 64px; border-right: 1px solid #d0d0d0; }
.side-handle { position: absolute; left: 0; top: 148px; width: 7px; height: 41px; background: #5e5a58; border: 1px solid #aaa; border-left: 0; border-radius: 0 4px 4px 0; }
.side-handle::before { content: ""; display: block; width: 3px; height: 4px; background: #fff; clip-path: polygon(0 0, 100% 50%, 0 100%); }

.mdi { display: flex; flex-direction: column; min-width: 0; border-left: 1px solid #c0c0ca; }
.viewport { flex: 1; position: relative; background: linear-gradient(#333366, #9898ad); }
.scene { position: absolute; inset: 0; width: 100%; height: 100%; }
.navcube { position: absolute; right: 0; top: 0; width: 110px; height: 100px; }
.axes { position: absolute; right: 6px; bottom: 15px; width: 33px; height: 30px; }
.doc-tabs { height: 20px; padding-bottom: 1px; display: flex; }
.doc-tab { display: flex; align-items: center; gap: 4px; width: 79px; padding-left: 7px; border: 1px solid #c9c9c9; border-top: 0; border-left: 0; background: #f7f7f7; }
.doc-tab > svg { width: 10px; height: 11px; }
.doc-tab button svg { width: 8px; height: 8px; }

.status { position: relative; isolation: isolate; display: flex; align-items: center; height: 19px; padding: 1px 1px 0; }
.message { flex: 1; }
.nav-style { display: flex; align-items: center; gap: 1px; margin-right: 8px; }
.nav-style svg { width: 9px; height: 9px; }
.nav-style i { margin-left: 8px; }
.watermark { position: absolute; z-index: -1; right: 8px; bottom: 10px; display: flex; align-items: center; gap: 7px; color: #fff; pointer-events: none; }
.seal { width: 24px; height: 24px; border-radius: 50%; background: #fff; color: #aaa; font-size: 18px; line-height: 23px; text-align: center; }
.brand { font-size: 18px; line-height: 24px; text-shadow: 0 0 2px #999, 1px 1px 1px #bbb; }
```
